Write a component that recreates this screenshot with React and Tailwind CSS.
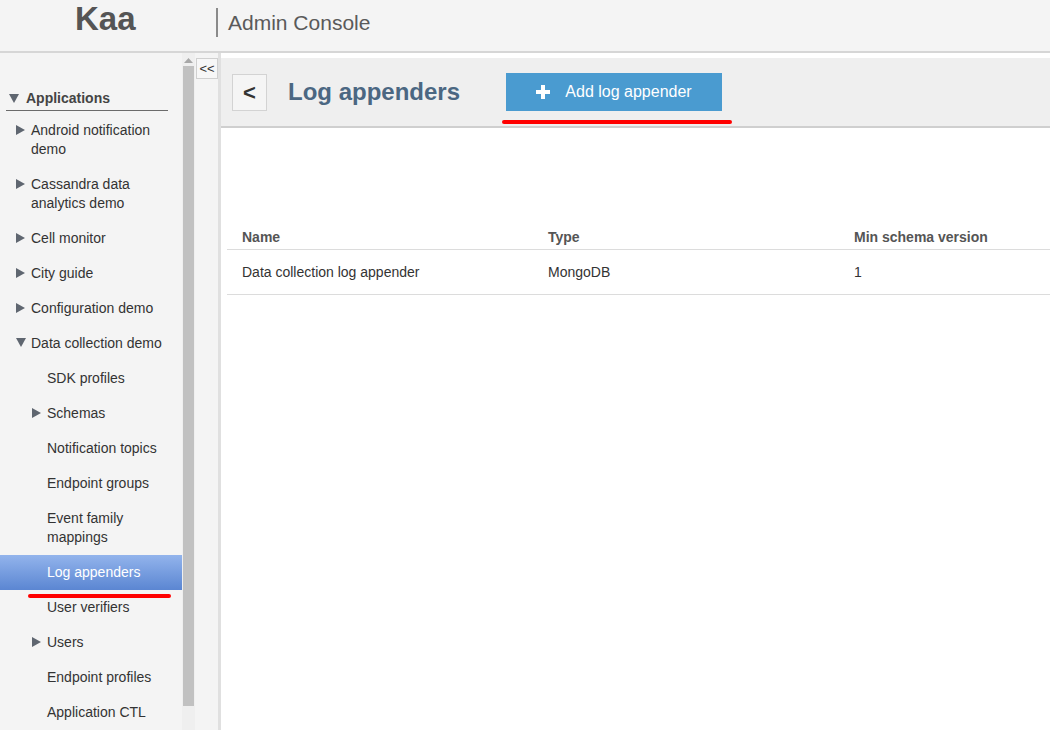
import React from 'react';

const font = { fontFamily: '"Liberation Sans", Arial, sans-serif' };

const navItems = [
  { label: 'Android notification demo', arrow: 'right', indent: 0 },
  { label: 'Cassandra data analytics demo', arrow: 'right', indent: 0 },
  { label: 'Cell monitor', arrow: 'right', indent: 0 },
  { label: 'City guide', arrow: 'right', indent: 0 },
  { label: 'Configuration demo', arrow: 'right', indent: 0 },
  { label: 'Data collection demo', arrow: 'down', indent: 0 },
  { label: 'SDK profiles', indent: 1 },
  { label: 'Schemas', arrow: 'right', indent: 1 },
  { label: 'Notification topics', indent: 1 },
  { label: 'Endpoint groups', indent: 1 },
  { label: 'Event family mappings', indent: 1 },
  { label: 'Log appenders', indent: 1, active: true },
  { label: 'User verifiers', indent: 1 },
  { label: 'Users', arrow: 'right', indent: 1 },
  { label: 'Endpoint profiles', indent: 1 },
  { label: 'Application CTL', indent: 1 },
];

const wraps = {
  'Android notification demo': ['Android notification', 'demo'],
  'Cassandra data analytics demo': ['Cassandra data', 'analytics demo'],
  'Event family mappings': ['Event family', 'mappings'],
};

function Arrow({ dir, light }) {
  const cls = light ? 'fill-white' : 'fill-[#5f6670]';
  if (dir === 'down') {
    return (
      <svg width="10" height="9" viewBox="0 0 10 9" className="shrink-0">
        <polygon points="0,0 10,0 5,9" className={cls} />
      </svg>
    );
  }
  return (
    <svg width="9" height="10" viewBox="0 0 9 10" className="shrink-0">
      <polygon points="0,0 9,5 0,10" className={cls} />
    </svg>
  );
}

function NavItem({ item }) {
  const lines = wraps[item.label] || [item.label];
  const left = item.indent ? 'pl-[32px]' : 'pl-[16px]';
  return (
    <div className="relative">
      <div
        className={`flex py-2 pr-2 ${left} ${
          item.active ? 'bg-gradient-to-b from-[#93b4ec] to-[#5b86d2] text-white' : 'text-[#333]'
        }`}
      >
        <div className="w-[15px] shrink-0 pt-[4px]">
          {item.arrow && <Arrow dir={item.arrow} light={item.active} />}
        </div>
        <div className="text-[14px] leading-[19px]">
          {lines.map((l, i) => (
            <div key={i}>{l}</div>
          ))}
        </div>
      </div>
      {item.active && (
        <div className="absolute left-[28px] top-[39px] h-[4px] w-[143px] rounded-full bg-[#ff0000]" />
      )}
    </div>
  );
}

export default function App() {
  return (
    <div className="h-[730px] w-[1050px] overflow-hidden bg-[#f4f4f4]" style={font}>
      <div className="flex h-[53px] border-b-2 border-[#d6d6d6] bg-[#f4f4f4]">
        <div className="w-[216px] pl-[75px] pt-[2px] text-[33px] font-bold leading-none text-[#555]">Kaa</div>
        <div className="mt-[8px] h-[29px] w-[2px] bg-[#8a8a8a]" />
        <div className="pl-[10px] pt-[12px] text-[21px] leading-none text-[#5a5a5a]">Admin Console</div>
      </div>

      <div className="flex h-[677px]">
        <div className="w-[182px] overflow-hidden bg-[#f4f4f4] pt-[35px]">
          <div className="ml-[6px] mr-[14px] flex items-center border-b border-[#6b6b6b] pb-[1px]">
            <div className="pl-[3px] pr-[7px]">
              <Arrow dir="down" />
            </div>
            <span className="text-[14px] font-bold text-[#444]">Applications</span>
          </div>
          <div className="mt-[2px]">
            {navItems.map((it) => (
              <NavItem key={it.label} item={it} />
            ))}
          </div>
        </div>

        <div className="flex w-[13px] flex-col items-center bg-[#efefef] pt-[5px]">
          <svg width="9" height="5" viewBox="0 0 9 5">
            <polygon points="0,5 4.5,0 9,5" fill="#a8a8a8" />
          </svg>
          <div className="mt-[3px] h-[640px] w-[11px] bg-[#c1c1c1]" />
        </div>

        <div className="w-[23px] bg-[#f4f4f4] pt-[5px]">
          <div className="ml-[1px] flex h-[21px] w-[22px] items-center justify-center border border-[#d0d0d0] bg-[#f7f7f7] text-[13px] leading-none text-[#333]">
            &lt;&lt;
          </div>
        </div>

        <div className="flex-1 border-l-[3px] border-[#e0e0e0] bg-white">
          <div className="mt-[5px] flex h-[70px] items-center border-b-2 border-[#cfcfcf] bg-[#efefef] pl-[11px]">
            <div className="flex h-[37px] w-[35px] items-center justify-center border border-[#d3d3d3] bg-[#f5f5f5] text-[22px] font-bold text-[#333]">
              &lt;
            </div>
            <div className="ml-[21px] text-[24px] font-bold text-[#4b6782]">Log appenders</div>
            <div className="relative ml-[46px]">
              <div className="flex h-[38px] w-[216px] items-center justify-center gap-[15px] bg-[#4a9bd0] text-[16px] text-white">
                <svg width="14" height="14" viewBox="0 0 14 14">
                  <path d="M5 0h4v5h5v4H9v5H5V9H0V5h5z" fill="#fff" />
                </svg>
                <span>Add log appender</span>
              </div>
              <div className="absolute left-[-4px] top-[47px] h-[4px] w-[230px] rounded-full bg-[#ff0000]" />
            </div>
          </div>

          <div className="ml-[6px] mt-[99px] text-[14px] text-[#333]">
            <div className="flex h-[23px] items-start border-b border-[#dcdcdc] pl-[15px] font-bold text-[#555]">
              <div className="w-[306px]">Name</div>
              <div className="w-[306px]">Type</div>
              <div>Min schema version</div>
            </div>
            <div className="flex h-[45px] items-center border-b border-[#dcdcdc] pl-[15px]">
              <div className="w-[306px]">Data collection log appender</div>
              <div className="w-[306px]">MongoDB</div>
              <div>1</div>
            </div>
          </div>
        </div>
      </div>
    </div>
  );
}
